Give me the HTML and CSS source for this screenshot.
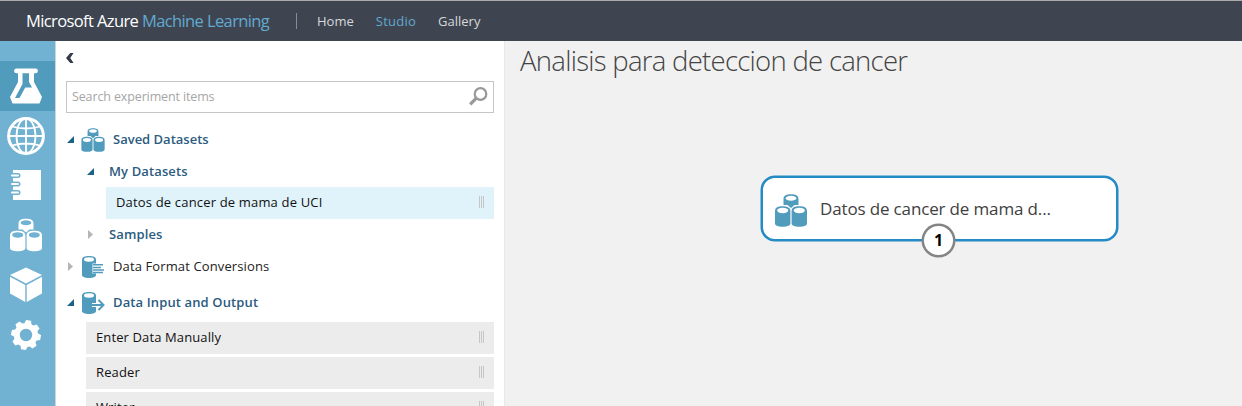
FILE: index.html
```html
<!DOCTYPE html>
<html lang="en">
<head>
<meta charset="utf-8">
<title>Microsoft Azure Machine Learning</title>
<link rel="stylesheet" href="styles.css">
</head>
<body>
<svg class="defs" width="0" height="0">
  <defs>
    <symbol id="cylinders" viewBox="0 0 32 33">
      <g fill="currentColor">
        <path d="M8.500 5C8.500 1.500 11.500 .3 16 .3S23.500 1.500 23.500 5v6h-4L16 14l-3.500-3h-4z"/>
        <path d="M0 17c0-3.500 3-4.800 7.500-4.800S15.400 13.500 15.400 17v12.500c0 2-3 3.200-7.700 3.200S0 31.500 0 29.500z"/>
        <path d="M16.600 17c0-3.500 3-4.800 7.700-4.800S32 13.500 32 17v12.500c0 2-3 3.200-7.700 3.200s-7.700-1.200-7.700-3.200z"/>
      </g>
      <g class="lid"><ellipse cx="16" cy="4.200" rx="5.300" ry="2.500"/><ellipse cx="7.700" cy="16.500" rx="5.500" ry="2.700"/><ellipse cx="24.300" cy="16.500" rx="5.500" ry="2.700"/></g>
    </symbol>
    <symbol id="grip" viewBox="0 0 5 12"><path fill="#c6c6c6" d="M0 0h1v12H0zM2 0h1v12H2zM4 0h1v12H4z"/></symbol>
    <symbol id="open" viewBox="0 0 7 7"><path fill="#1b6289" d="M7 0v7H0z"/></symbol>
    <symbol id="closed" viewBox="0 0 5 9"><path fill="#b5b5b5" d="M0 0l5 4.500L0 9z"/></symbol>
  </defs>
</svg>
<header class="topbar">
  <div class="brand">Microsoft Azure <span>Machine Learning</span></div>
  <nav class="nav"><a>Home</a><a class="current">Studio</a><a>Gallery</a></nav>
</header>
<div class="workspace">
  <aside class="rail">
    <div class="rail-item active"><svg width="32" height="36" viewBox="0 0 32 36"><path fill="#fff" d="M6.500.500h19a2.200 2.200 0 0 1 0 4.800H24V14l8 15-2.500 6.500h-27L0 29l8-15V5.300H6.500a2.200 2.200 0 0 1 0-4.800z"/><path fill="#519bbd" d="M12.500 5.300H19V14l3 5.500h-6.800L9.500 30H5l7.500-14z"/></svg></div>
    <div class="rail-item"><svg width="38" height="38" viewBox="0 0 38 38" fill="none" stroke="#fff" stroke-width="1.800"><circle cx="19" cy="19" r="17.400" stroke-width="3"/><ellipse cx="19" cy="19" rx="9.500" ry="17.500"/><path d="M19 2v34M2 19h34M5 9.500q14 4 28 0M5 28.500q14-4 28 0"/></svg></div>
    <div class="rail-item"><svg width="32" height="32" viewBox="0 0 32 32"><path fill="#fff" d="M3 1h28v30H3z"/><path fill="none" stroke="#71b1d1" stroke-width="5" stroke-linecap="round" d="M1 6.500h7M1 15h7M1 23.500h7"/><path fill="none" stroke="#fff" stroke-width="2" stroke-linecap="round" d="M2 6.500h6M2 15h6M2 23.500h6"/></svg></div>
    <div class="rail-item"><svg class="rail-cyl" width="32" height="34"><use href="#cylinders"/></svg></div>
    <div class="rail-item"><svg width="34" height="36" viewBox="0 0 34 36" fill="#fff"><path d="M17 .500L33 8 17 16.500 1 8zM1 9.800l15.300 8.300v17L1 26.500zM33 9.800l-15.300 8.300v17L33 26.500z"/></svg></div>
    <div class="rail-item"><svg width="30" height="30" viewBox="-15 -15 30 30"><g fill="#fff" transform="rotate(10)"><circle r="12"/><g id="teeth"><path id="tooth" d="M-4-10l1.500-4.800h5L4-10v20l-1.500 4.800h-5L-4 10z"/><use href="#tooth" transform="rotate(90)"/></g><use href="#teeth" transform="rotate(45)"/></g><circle r="6.200" fill="#71b1d1"/></svg></div>
  </aside>
  <section class="panel">
    <svg class="collapse" width="8" height="10" viewBox="0 0 8 10"><path d="M4.300 0H7.600L4.200 5l3.400 5H4.300L0 5z" fill="#343b47"/></svg>
    <div class="search"><span>Search experiment items</span><svg width="19" height="19" viewBox="0 0 19 19" fill="none" stroke="#999"><circle cx="11.500" cy="7" r="5.800" stroke-width="2.200"/><path d="M7.300 11.200L1.200 17.300" stroke-width="3.200"/></svg></div>
    <div class="tree">
      <div class="row saved"><svg class="arrow" width="7" height="7"><use href="#open"/></svg><svg class="cat" width="24" height="24"><use href="#cylinders"/></svg><b>Saved Datasets</b></div>
      <div class="row sub"><svg class="arrow" width="7" height="7"><use href="#open"/></svg><b>My Datasets</b></div>
      <div class="item selected"><span>Datos de cancer de mama de UCI</span><svg width="5" height="12"><use href="#grip"/></svg></div>
      <div class="row sub samples"><svg class="arrow" width="5" height="9"><use href="#closed"/></svg><b>Samples</b></div>
      <div class="row format"><svg class="arrow" width="5" height="9"><use href="#closed"/></svg><svg class="cat" width="24" height="24" viewBox="0 0 24 24"><path fill="#519bbd" d="M1 4.500C1 2 4 1 8 1s7 1 7 3.500V20c0 2-3 3-7 3s-7-1-7-3z"/><ellipse cx="8" cy="4.500" rx="5" ry="2.200" fill="#fff"/><path fill="#fff" d="M11.500 8.500H15v10h-3.500z"/><path stroke="#519bbd" stroke-width="1.500" d="M12 9.800h10M12 12.400h8M12 15h11M12 17.600h10"/></svg><span>Data Format Conversions</span></div>
      <div class="row io"><svg class="arrow" width="7" height="7"><use href="#open"/></svg><svg class="cat" width="24" height="24" viewBox="0 0 24 24"><path fill="#519bbd" d="M1 4.500C1 2 4 1 8 1s7 1 7 3.500V20c0 2-3 3-7 3s-7-1-7-3z"/><ellipse cx="8" cy="4.500" rx="5" ry="2.200" fill="#fff"/><path fill="none" stroke="#fff" stroke-width="4" d="M11 14h11M17.500 9l5 5-5 5"/><path fill="none" stroke="#519bbd" stroke-width="2" d="M11 14h11M17.500 9l5 5-5 5"/></svg><b>Data Input and Output</b></div>
      <div class="items">
        <div class="item"><span>Enter Data Manually</span><svg width="5" height="12"><use href="#grip"/></svg></div>
        <div class="item"><span>Reader</span><svg width="5" height="12"><use href="#grip"/></svg></div>
        <div class="item"><span>Writer</span><svg width="5" height="12"><use href="#grip"/></svg></div>
      </div>
    </div>
  </section>
  <main class="canvas">
    <h1>Analisis para deteccion de cancer</h1>
    <div class="node"><svg width="32" height="33"><use href="#cylinders"/></svg><span>Datos de cancer de mama d...</span><div class="port">1</div></div>
  </main>
</div>
</body>
</html>
```
FILE: styles.css
```css
* { box-sizing: border-box; }
body { margin: 0; height: 406px; overflow: hidden; font-family: "Open Sans", "Noto Sans", sans-serif; font-size: 13px; color: #222; background: #fff; }
svg { display: block; flex: none; }
.defs { position: absolute; }
.lid { fill: var(--lid, #fff); }
.topbar { height: 41px; border-top: 1px solid #aaa; background: #3e4551; display: flex; align-items: center; padding-left: 26px; white-space: nowrap; }
.brand { width: 270px; font-size: 16.500px; line-height: 24px; color: #fff; letter-spacing: -.61px; }
.brand span { color: #62a9d0; }
.nav { display: flex; align-items: center; height: 16px; border-left: 1px solid #878b92; padding-left: 20px; gap: 22px; color: #d6d8da; }
.nav .current { color: #62a9d0; letter-spacing: .25px; }
.workspace { display: flex; height: 365px; }
.rail { width: 56px; background: #71b1d1; border-right: 1px solid #ccd5da; padding-top: 20px; }
.rail-item { height: 49.800px; width: 55px; padding-right: 3px; display: flex; align-items: center; justify-content: center; }
.rail-item.active { background: #519bbd; }
.rail-cyl { color: #fff; --lid: #71b1d1; }
.panel { width: 448px; padding: 12px 10px 0; overflow: hidden; }
.search { margin-top: 18px; height: 32px; border: 1px solid #c5c5c5; display: flex; align-items: center; justify-content: space-between; padding: 0 5px 2px 5px; color: #a6a6a6; font-size: 12.500px; letter-spacing: -.13px; }
.tree { padding-top: 10px; white-space: nowrap; letter-spacing: .12px; }
.row { display: flex; align-items: center; height: 32px; padding-left: 1px; }
.row b { font-weight: 600; color: #2b5c80; }
.row .arrow { width: 7px; }
.row .cat { margin: 2px 8px 0 7px; color: #519bbd; }
.row.saved { letter-spacing: 0; }
.row.sub { padding-left: 21px; }
.sub .arrow { margin-right: 15px; }
.item { height: 32px; background: #ececec; display: flex; align-items: center; justify-content: space-between; padding: 0 10px 2px; color: #111; }
.selected { margin-left: 40px; background: #e0f3fb; letter-spacing: .17px; }
.row.samples { height: 30px; }
.row.format { height: 34px; }
.row.io { height: 39px; padding-bottom: 1px; }
.items { margin-left: 20px; display: grid; gap: 3px; }
.canvas { flex: 1; background: #f1f1f1; border-left: 1px solid #e8e8e8; padding-left: 15px; }
h1 { margin: 0; font-size: 27.500px; line-height: 40px; font-weight: 300; letter-spacing: -.72px; color: #444; white-space: nowrap; }
.node { position: relative; width: 357px; height: 65px; margin: 95px 0 0 241px; border: 2px solid #248bc4; box-shadow: 0 0 0 .5px #248bc4; border-radius: 14px; background: #fff; display: flex; align-items: center; padding: 3px 0 0 12px; gap: 13px; font-size: 17px; letter-spacing: -.15px; color: #404040; white-space: nowrap; }
.node > svg { color: #519bbd; }
.node > span { padding-bottom: 4px; }
.port { position: absolute; left: 159px; top: 46px; width: 33px; height: 33px; border: 2px solid #858585; box-shadow: 0 0 0 .5px #858585; border-radius: 50%; background: #fff; color: #000; font-weight: 700; font-size: 16px; line-height: 28px; text-align: center; }
```
